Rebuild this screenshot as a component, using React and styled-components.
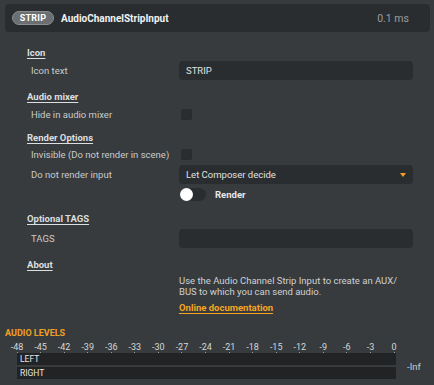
import React, { useState } from 'react';
import styled, { createGlobalStyle } from 'styled-components';

const GlobalStyle = createGlobalStyle`
  html, body {
    margin: 0;
    padding: 0;
    background: #373b3e;
    font-family: Roboto, "Noto Sans", sans-serif;
    color: #d2d4d5;
  }
`;

const Page = styled.div`
  width: 434px;
  height: 385px;
  overflow: hidden;
`;

const Header = styled.div`
  margin: 4px 4px 0 5px;
  height: 28px;
  background: #2a2d30;
  border-radius: 4px;
  display: flex;
  align-items: center;
  padding: 0 21px 0 7px;
`;

const Badge = styled.span`
  box-sizing: border-box;
  width: 42px;
  height: 14px;
  border-radius: 7px;
  background: #6c6f71;
  border: 1px solid #8a8d8f;
  color: #fff;
  font-size: 9px;
  font-weight: 700;
  display: flex;
  align-items: center;
  justify-content: center;
  letter-spacing: 0.2px;
`;

const Title = styled.span`
  margin-left: 7px;
  font-size: 10px;
  font-weight: 700;
  color: #f2f2f2;
  flex: 1;
`;

const Timing = styled.span`
  font-size: 10.5px;
  color: #9a9d9f;
`;

const Form = styled.div`
  padding-left: 27px;
  width: 386px;
`;

const Heading = styled.div`
  margin-top: ${({ $top }) => $top}px;
  height: 16px;
  line-height: 16px;
  font-size: 9.5px;
  font-weight: 700;
  color: #dcdedf;
  text-decoration: underline;
  text-underline-offset: 2px;
`;

const Row = styled.div`
  display: grid;
  grid-template-columns: 152px 234px;
  align-items: center;
  margin-top: ${({ $top = 0 }) => $top}px;
  min-height: ${({ $h = 16 }) => $h}px;
`;

const Label = styled.span`
  padding-left: 4px;
  font-size: 9.5px;
  color: #c9cbcc;
  white-space: nowrap;
`;

const Field = styled.div`
  box-sizing: border-box;
  height: ${({ $h = 19 }) => $h}px;
  background: #2a2d2f;
  border-radius: 4px;
  display: flex;
  align-items: center;
  padding: 0 7px;
  font-size: 9.5px;
  color: #e0e0e0;
  justify-content: space-between;
`;

const Check = styled.span`
  margin-left: 2px;
  width: 11px;
  height: 11px;
  border-radius: 2px;
  background: #2a2d2f;
`;

const Caret = styled.span`
  width: 0;
  height: 0;
  border-left: 3px solid transparent;
  border-right: 3px solid transparent;
  border-top: 4px solid #f0a024;
`;

const Toggle = styled.span`
  position: relative;
  margin-left: 1px;
  width: 26px;
  height: 13px;
  border-radius: 7px;
  background: #2a2d30;
  &::after {
    content: '';
    position: absolute;
    left: 0;
    top: 0;
    width: 13px;
    height: 13px;
    border-radius: 50%;
    background: #fff;
  }
`;

const ToggleWrap = styled.div`
  display: flex;
  align-items: center;
  gap: 9px;
  font-size: 9.5px;
  font-weight: 700;
  color: #e6e6e6;
`;

const AboutText = styled.div`
  grid-column: 2;
  font-size: 9.5px;
  line-height: 11px;
  color: #cfd1d2;
  white-space: nowrap;
`;

const DocLink = styled.a`
  grid-column: 2;
  margin-top: 5px;
  font-size: 9.5px;
  font-weight: 700;
  color: #f5a523;
  text-decoration: underline;
  text-underline-offset: 2px;
`;

const Levels = styled.div`
  margin-top: 14px;
  padding-left: 5px;
`;

const LevelsTitle = styled.div`
  font-size: 9px;
  font-weight: 700;
  color: #f0a024;
  height: 13px;
  line-height: 13px;
`;

const Scale = styled.div`
  display: flex;
  justify-content: space-between;
  width: 397px;
  margin-left: 2px;
  margin-top: 2px;
`;

const Tick = styled.span`
  width: 20px;
  text-align: center;
  font-size: 9px;
  line-height: 10px;
  color: #d6d8d9;
  display: flex;
  flex-direction: column;
  align-items: center;
  &::after {
    content: '';
    width: 1px;
    height: 2px;
    background: #9a9d9f;
  }
`;

const Meters = styled.div`
  display: flex;
  align-items: center;
  margin: -1px 0 0 17px;
`;

const Bars = styled.div`
  width: 379px;
  display: flex;
  flex-direction: column;
  gap: 2px;
`;

const Bar = styled.div`
  height: 12px;
  background: #222324;
  font-size: 8.5px;
  line-height: 12px;
  padding-left: 3px;
  color: #e8e8e8;
`;

const Inf = styled.span`
  margin-left: 11px;
  font-size: 9.5px;
  color: #c9cbcc;
`;

const scale = [-48, -45, -42, -39, -36, -33, -30, -27, -24, -21, -18, -15, -12, -9, -6, -3, 0];

export default function App() {
  const [render] = useState(false);
  return (
    <Page>
      <GlobalStyle />
      <Header>
        <Badge>STRIP</Badge>
        <Title>AudioChannelStripInput</Title>
        <Timing>0.1 ms</Timing>
      </Header>
      <Form>
        <Heading $top={13}>Icon</Heading>
        <Row $h={19}>
          <Label>Icon text</Label>
          <Field>STRIP</Field>
        </Row>
        <Heading $top={9}>Audio mixer</Heading>
        <Row $top={1}>
          <Label>Hide in audio mixer</Label>
          <Check />
        </Row>
        <Heading $top={8}>Render Options</Heading>
        <Row>
          <Label>Invisible (Do not render in scene)</Label>
          <Check />
        </Row>
        <Row $top={3} $h={19}>
          <Label>Do not render input</Label>
          <Field>
            Let Composer decide
            <Caret />
          </Field>
        </Row>
        <Row $top={4} $h={13}>
          <span />
          <ToggleWrap>
            <Toggle data-on={render} />
            Render
          </ToggleWrap>
        </Row>
        <Heading $top={10}>Optional TAGS</Heading>
        <Row $top={2} $h={19}>
          <Label>TAGS</Label>
          <Field />
        </Row>
        <Heading $top={9}>About</Heading>
        <Row $top={2}>
          <AboutText>
            Use the Audio Channel Strip Input to create an AUX/
            <br />
            BUS to which you can send audio.
          </AboutText>
          <DocLink>Online documentation</DocLink>
        </Row>
      </Form>
      <Levels>
        <LevelsTitle>AUDIO LEVELS</LevelsTitle>
        <Scale>
          {scale.map((v) => (
            <Tick key={v}>{v}</Tick>
          ))}
        </Scale>
      </Levels>
      <Meters>
        <Bars>
          <Bar>LEFT</Bar>
          <Bar>RIGHT</Bar>
        </Bars>
        <Inf>-Inf</Inf>
      </Meters>
    </Page>
  );
}
